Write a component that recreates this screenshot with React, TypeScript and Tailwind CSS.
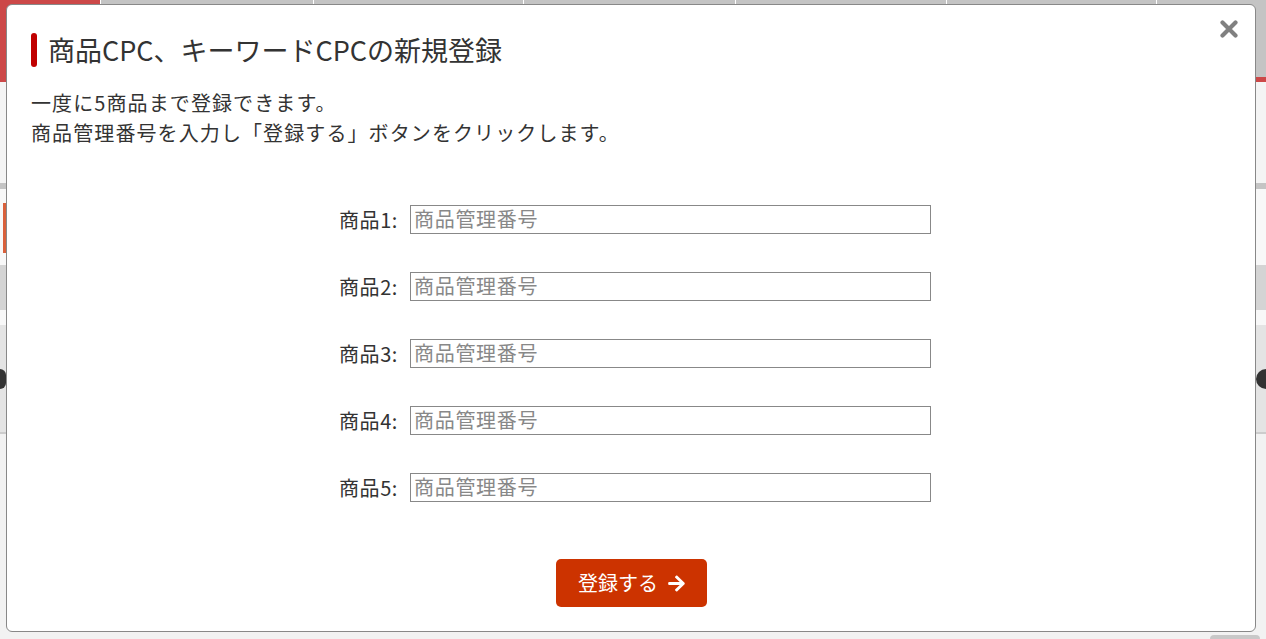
import React from 'react';
import { FaArrowRight } from 'react-icons/fa';

const products = [1, 2, 3, 4, 5];

const Backdrop: React.FC = () => {
  return (
    <div className="flex flex-col w-full h-[639px] overflow-hidden">
      {/* header tabs */}
      <div className="flex h-[77px] bg-[#c4c4c4]">
        <div className="w-[100px] bg-[#cc4848]" />
        <div className="w-[213px] border-l border-white" />
        <div className="w-[210px] border-l border-white" />
        <div className="w-[212px] border-l border-white" />
        <div className="w-[211px] border-l border-white" />
        <div className="w-[210px] border-l border-white" />
        <div className="flex-1 border-l border-white" />
      </div>
      <div className="h-[5px] bg-[#cc4848]" />
      <div className="h-[101px] bg-[#f4f4f4]" />
      <div className="h-[6px] bg-[#c4c4c4]" />
      <div className="h-[76px] bg-[#f8f8f8] flex flex-col">
        <div className="mt-[14px] ml-[3px] w-[3px] h-[50px] bg-[#d9603b]" />
      </div>
      <div className="h-[45px] bg-[#d4d4d4]" />
      <div className="h-[15px] bg-[#f8f8f8]" />
      <div className="h-[107px] bg-[#e4e4e4] flex items-center justify-between">
        <div className="w-[6px] h-[20px] rounded-r-full bg-[#333]" />
        <div className="w-[20px] h-[20px] rounded-full bg-[#333] -mr-[10px]" />
      </div>
      <div className="h-[2px] bg-[#cccccc]" />
      <div className="flex-1 bg-[#f2f2f2] flex justify-end items-end">
        <div className="w-[50px] h-[4px] mr-[6px] rounded-t bg-[#c8c8c8]" />
      </div>
    </div>
  );
};

const App: React.FC = () => {
  return (
    <div className="relative w-full h-[639px] overflow-hidden font-['Noto_Sans_CJK_JP','Noto_Sans',sans-serif] text-[#333]">
      <Backdrop />

      {/* Modal */}
      <div className="absolute left-[6px] top-[4px] w-[1250px] h-[628px] bg-white border border-[#888] rounded-md flex flex-col px-[24px] pt-[28px]">
        <button className="absolute right-[17px] top-[15px]">
          <svg width="18" height="18" viewBox="0 0 18 18">
            <path d="M2.5 2.5 L15.5 15.5 M15.5 2.5 L2.5 15.5" stroke="#808080" strokeWidth="4.2" strokeLinecap="round" />
          </svg>
        </button>

        {/* Title */}
        <div className="flex items-center gap-[11px]">
          <div className="w-[6px] h-[34px] rounded-full bg-[#c00000]" />
          <h2 className="text-[27px] leading-[34px] text-[#333]">商品CPC、キーワードCPCの新規登録</h2>
        </div>

        {/* Description */}
        <div className="mt-[21px] text-[20px] leading-[30px] tracking-[1.1px]">
          <p>一度に5商品まで登録できます。</p>
          <p>商品管理番号を入力し「登録する」ボタンをクリックします。</p>
        </div>

        {/* Form */}
        <div className="mt-[57px] mx-auto w-[600px] flex flex-col gap-[38px]">
          {products.map((n) => (
            <div key={n} className="flex items-center">
              <label className="w-[79px] pr-[12px] text-right text-[20px] tracking-[0.6px] leading-[29px] whitespace-nowrap">
                商品{n}:
              </label>
              <input
                type="text"
                placeholder="商品管理番号"
                className="w-[521px] h-[29px] border border-[#888] px-[3px] pb-[2px] text-[20px] tracking-[0.7px] leading-[25px] placeholder:text-[#888] outline-none"
              />
            </div>
          ))}
        </div>

        {/* Submit */}
        <div className="mt-[57px] flex justify-center">
          <button className="w-[151px] h-[48px] rounded-[5px] bg-[#cc3300] text-white text-[20px] flex items-center justify-center gap-[9px] pl-[2px]">
            <span>登録する</span>
            <FaArrowRight className="w-[19px] h-[19px]" />
          </button>
        </div>
      </div>
    </div>
  );
};

export default App;
